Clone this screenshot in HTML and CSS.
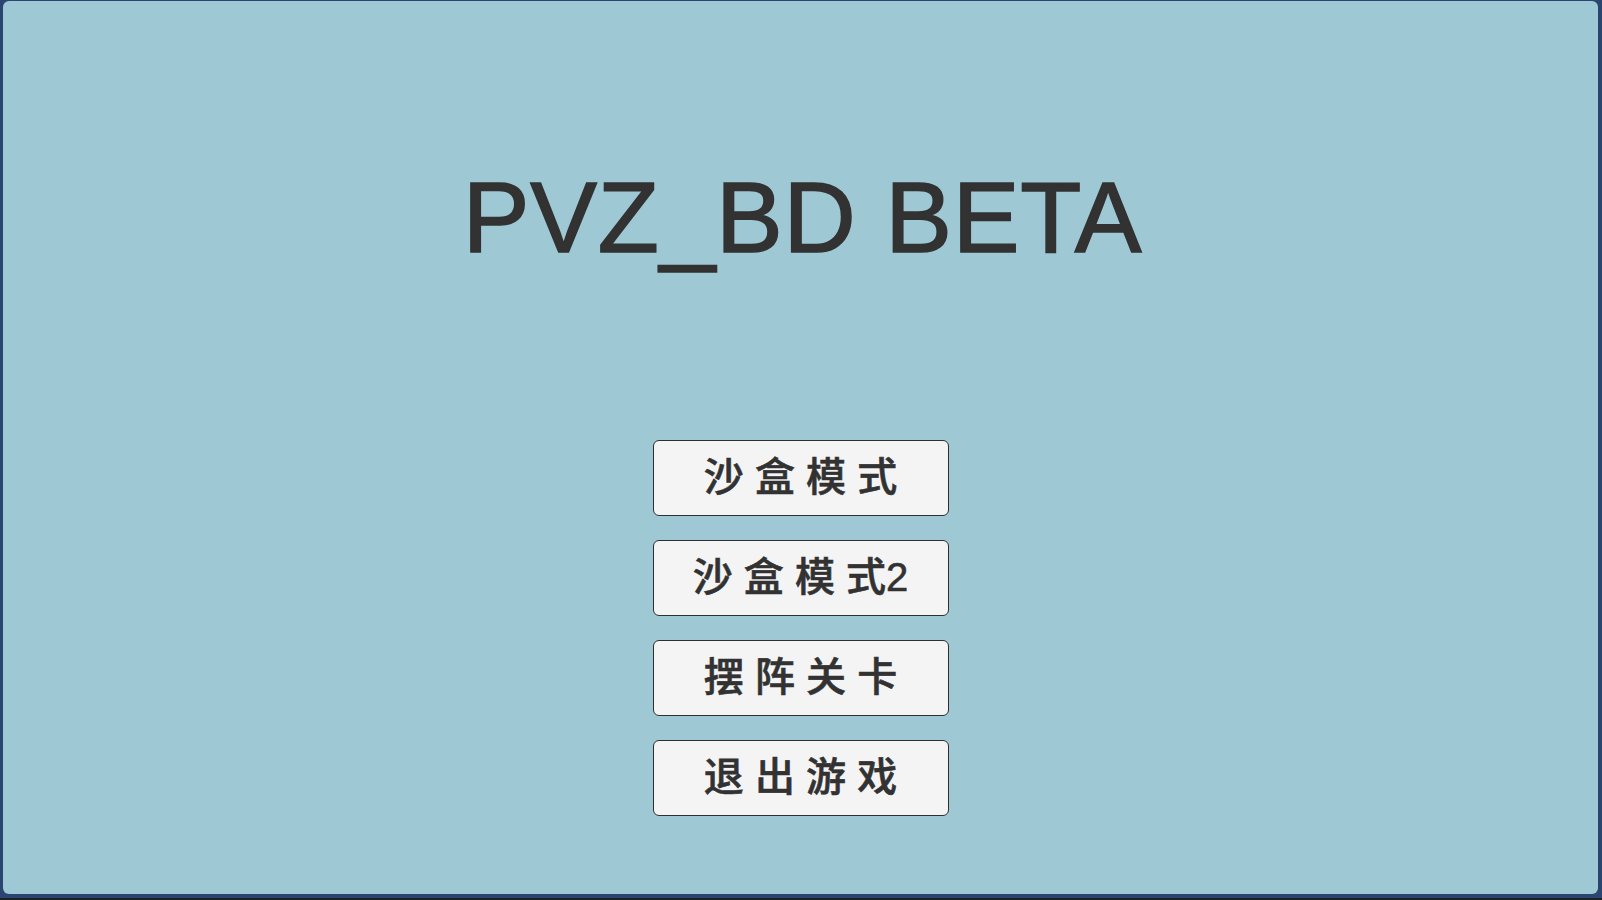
FILE: index.html
```html
<!DOCTYPE html>
<html lang="zh-CN">
<head>
<meta charset="utf-8">
<title>PVZ_BD BETA</title>
<link rel="stylesheet" href="styles.css">
</head>
<body>
<div class="frame">
  <main class="panel">
    <h1 class="title">PVZ_BD BETA</h1>
    <nav class="menu">
      <button class="menu-btn">沙 盒 模 式</button>
      <button class="menu-btn">沙 盒 模 式2</button>
      <button class="menu-btn">摆 阵 关 卡</button>
      <button class="menu-btn">退 出 游 戏</button>
    </nav>
  </main>
</div>
</body>
</html>
```

FILE: styles.css
```css
html {
  background: #1c2029;
}
body {
  margin: 0;
  height: 900px;
  overflow: hidden;
}
.frame {
  box-sizing: border-box;
  height: 898px;
  background: #2a4570;
  padding: 1px 4px 4px 3px;
}
.panel {
  box-sizing: border-box;
  height: 100%;
  background: #9fc8d5;
  border-radius: 6px;
  display: flex;
  flex-direction: column;
  align-items: center;
}
.title {
  margin: 166px 0 0 0;
  padding-left: 4px;
  font-family: "Liberation Sans", Arial, sans-serif;
  font-weight: normal;
  font-size: 100px;
  line-height: 100px;
  color: #323232;
  letter-spacing: 0.8px;
  -webkit-text-stroke: 1.6px #323232;
}
.menu {
  margin-top: 173px;
  display: flex;
  flex-direction: column;
  gap: 24px;
}
.menu-btn {
  box-sizing: border-box;
  width: 296px;
  height: 76px;
  margin: 0;
  padding: 0 0 3px 0;
  background: #f4f4f4;
  border: 1px solid #2f2f2f;
  border-radius: 6px;
  font-family: "Liberation Sans", "Noto Sans CJK SC", sans-serif;
  font-weight: 500;
  font-size: 40px;
  line-height: 40px;
  color: #323232;
  -webkit-text-stroke: 0.6px #323232;
  cursor: pointer;
}
```
